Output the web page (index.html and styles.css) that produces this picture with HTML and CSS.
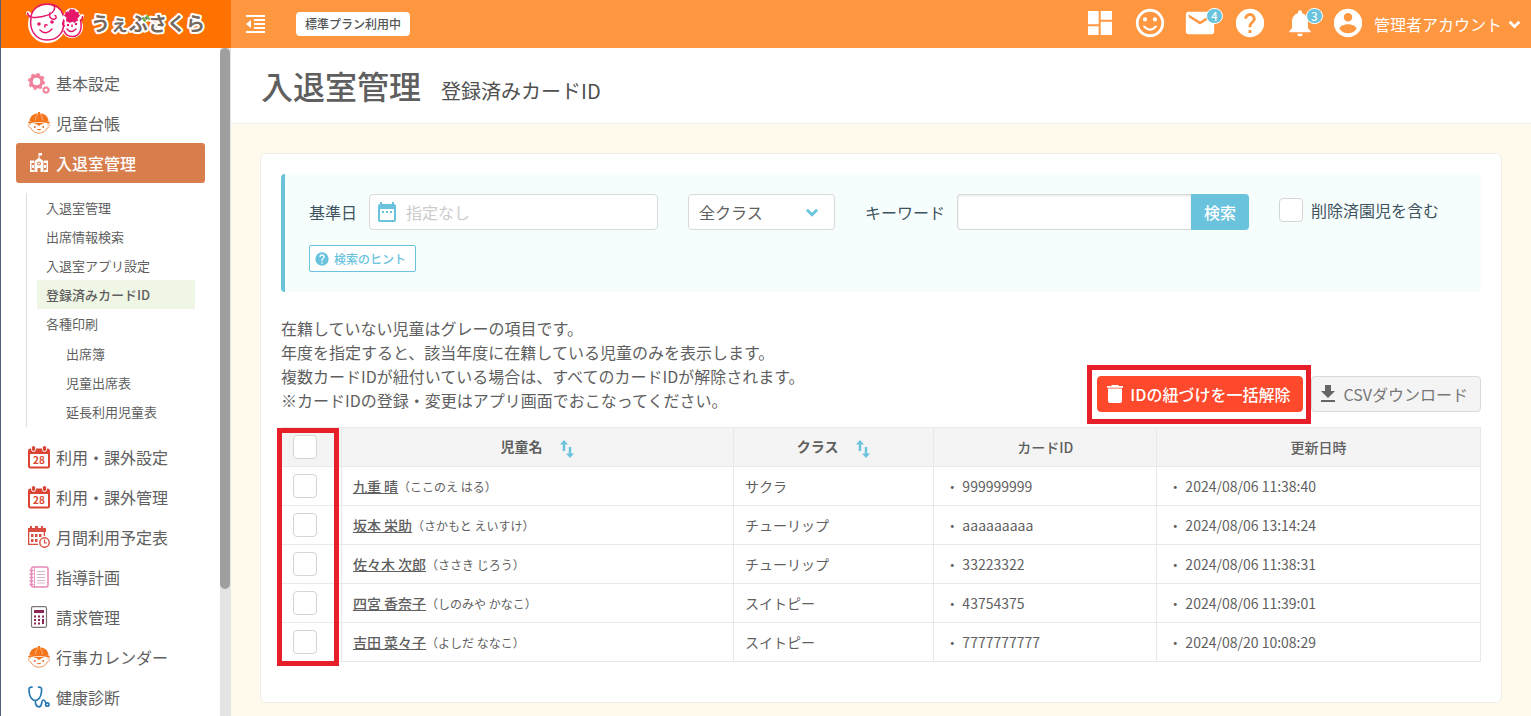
FILE: index.html
```html
<!DOCTYPE html>
<html lang="ja">
<head>
<meta charset="utf-8">
<title>登録済みカードID | うぇぶさくら</title>
<link rel="stylesheet" href="styles.css">
</head>
<body>
<svg class="defs" aria-hidden="true">
  <symbol id="help" viewBox="0 0 24 24"><path d="M12 2a10 10 0 1 0 0 20 10 10 0 0 0 0-20zm1 17h-2v-2h2v2zm2.070-7.750-.9.920C13.450 12.900 13 13.500 13 15h-2v-.5c0-1.100.45-2.100 1.170-2.830l1.240-1.260c.37-.36.59-.86.59-1.410a2 2 0 0 0-4 0H8a4 4 0 0 1 8 0c0 .88-.36 1.680-.93 2.250z"/></symbol>
  <symbol id="chevron" viewBox="0 0 12 8"><path d="M1.500 1.500 6 6l4.500-4.500" fill="none" stroke="currentColor" stroke-width="2.400"/></symbol>
  <symbol id="child" viewBox="0 0 22 22">
    <path d="M10 0h2v2h-2zM1.500 9.500C1.500 4 6 1.200 11 1.200S20.500 4 20.500 9.500z" fill="#f5751d"/>
    <path d="M7.500 8.500C7.500 5.500 8.500 3.500 10 2M14.500 8.500C14.500 5.500 13.500 3.500 12 2" fill="none" stroke="#ffc08f" stroke-width=".8"/>
    <path d="M.3 10.800Q11 7.500 21.700 10.800" fill="none" stroke="#f5751d" stroke-width="1.600"/>
    <path d="M2.800 12c-3-.5-3 3.500 0 4 1.500 3.200 4.500 5.200 8.200 5.200s6.700-2 8.200-5.200c3-.5 3-4.500 0-4" fill="#fff" stroke="#ef935a" stroke-width="1"/>
    <path d="M5.500 11.500q5.500-1.500 11 0-3.500.3-5.500 2.500-2-2.200-5.500-2.500z" fill="#f5751d"/><circle cx="6.800" cy="15" r=".9" fill="#d8622a"/><circle cx="15.200" cy="15" r=".9" fill="#d8622a"/><path d="M8.500 17q2.500 2.500 5 0z" fill="#f5751d"/>
  </symbol>
  <symbol id="calendar" viewBox="0 0 22 23">
    <rect x="0" y="2.500" width="22" height="20" rx="2.500" fill="#db4432"/><rect x="2" y="8" width="18" height="12.500" fill="#fff"/>
    <g fill="#db4432" stroke="#fff"><rect x="3.500" y="-.5" width="4" height="6" rx="2"/><rect x="14.500" y="-.5" width="4" height="6" rx="2"/></g>
  </symbol>
  <symbol id="sort" viewBox="0 0 14 18"><path d="M4 0 0 4.500h2.800V11h2.400V4.500H8zM10 18l4-4.500h-2.800V7H8.800v6.500H6z"/></symbol>
</svg>

<div class="app">
  <header class="header">
    <a class="logo" href="#" aria-label="うぇぶさくら">
      <svg width="184" height="46" viewBox="0 0 184 46">
        <g fill="#fff" stroke="#fff" stroke-width="4" stroke-linejoin="round" stroke-linecap="round"><circle cx="21" cy="23" r="17"/><circle cx="46" cy="26" r="9"/><circle cx="46" cy="15" r="6"/><path d="M2 12l4 4M55 16l1-1"/></g>
        <g fill="none" stroke="#e5156a" stroke-width="1.500" stroke-linecap="round">
          <path d="M1.500 12c1 4 4 5 8 4.500 8-.5 16-3 18-6.500 1.500-3 2-5-.5-5.500"/>
          <path d="M24 12c-1.500 4 1.500 7 5 6 2-.5 1-3.500 0-3.500M5 15C7 7 14 3 21 3c8 0 14 4 16 11"/>
          <path d="M5 17c-2 11 4 22 16 22 12 0 18-9 16.500-20"/>
          <path d="M38 20c-2 2-2 4 .5 5M38 30c2 5 6 5.500 8.500 5.500 7 0 10-7 8-16 1.500-.5 2-2 2-4"/>
          <path d="M14 29q6 6 12-1M41 28q4 5 9 0M19 26q-1-3 2-2M46 24v1.500"/>
        </g>
        <g fill="#e5156a"><circle cx="13" cy="23" r="1.800"/><circle cx="26" cy="21" r="1.800"/><circle cx="42" cy="24" r="1.200"/><circle cx="50" cy="23" r="1.200"/>
        <path d="M46 15l-2.500-5 1.300-1.500L46 9.800l1.200-1.300L49 10zM46 15l4-3.800 2.200.6-.3 1.700 1.300 1-1.500 1.800zM46 15l5 2.500.2 2.200-1.700-.1-.8 1.500-2.200-1zM46 15l-.5 5.500-2.200.8-.8-1.500-1.700.2-.1-2.200zM46 15l-5.500 1-1.700-1.600 1.300-1-.3-1.700 2.200-.8z" stroke="#e5156a" stroke-width="1.200"/></g>
        <text x="65" y="30" class="logo-text">うぇぶさくら</text>
        <path d="M117 17l2 3M121 15l2 3" stroke="#64b432" stroke-width="2" stroke-linecap="round"/>
      </svg>
    </a>
    <div class="toolbar">
      <button class="icon-btn" aria-label="メニューを閉じる"><svg width="20" height="18" viewBox="0 0 20 18" fill="#fff"><path d="M0 0h19v2H0zM8 4h11v2H8zM8 8h11v2H8zM8 12h11v2H8zM0 16h19v2H0zM0 9l5-4v8z"/></svg></button>
      <span class="plan">標準プラン利用中</span>
      <nav class="tools" aria-label="ツール">
        <a href="#" aria-label="ダッシュボード"><svg width="32" height="32" viewBox="0 0 24 24"><path d="M3 13h8V3H3v10zm0 8h8v-6.500H3V21zm9.500 0H21V11h-8.500v10zm0-18v6.500H21V3h-8.500z"/></svg></a>
        <a href="#" aria-label="アンケート"><svg width="34" height="34" viewBox="0 0 24 24"><path d="M12 2a10 10 0 1 0 0 20 10 10 0 0 0 0-20zm0 18a8 8 0 1 1 0-16 8 8 0 0 1 0 16zm3.500-9a1.500 1.500 0 1 0 0-3 1.500 1.500 0 0 0 0 3zm-7 0a1.500 1.500 0 1 0 0-3 1.500 1.500 0 0 0 0 3zM12 17.500c2.330 0 4.310-1.460 5.110-3.500h-1.700a4 4 0 0 1-6.820 0h-1.700c.8 2.040 2.780 3.500 5.110 3.500z"/></svg></a>
        <a href="#" aria-label="メール"><svg width="34" height="34" viewBox="0 0 24 24"><path d="M20 4H4a2 2 0 0 0-2 2v12c0 1.100.9 2 2 2h16a2 2 0 0 0 2-2V6a2 2 0 0 0-2-2zm0 4-8 5-8-5V6l8 5 8-5v2z"/></svg><span class="badge">4</span></a>
        <a href="#" aria-label="ヘルプ"><svg width="34" height="34"><use href="#help"/></svg></a>
        <a href="#" aria-label="お知らせ"><svg width="32" height="32" viewBox="0 0 24 24"><path d="M12 22c1.100 0 2-.9 2-2h-4a2 2 0 0 0 2 2zm6-6v-5c0-3.070-1.640-5.640-4.500-6.320V4a1.500 1.500 0 0 0-3 0v.68C7.630 5.360 6 7.920 6 11v5l-2 2v1h16v-1l-2-2z"/></svg><span class="badge">3</span></a>
      </nav>
      <button class="account"><svg width="34" height="34" viewBox="0 0 24 24" fill="currentColor"><path d="M12 2a10 10 0 1 0 0 20 10 10 0 0 0 0-20zm0 3a3 3 0 1 1 0 6 3 3 0 0 1 0-6zm0 14.200a7.200 7.200 0 0 1-6-3.220c.03-1.990 4-3.080 6-3.080s5.970 1.090 6 3.080a7.200 7.200 0 0 1-6 3.220z"/></svg><span>管理者アカウント</span><svg width="13" height="9"><use href="#chevron"/></svg></button>
    </div>
  </header>

  <div class="body">
    <aside class="sidebar">
      <nav class="menu" aria-label="メインメニュー">
        <a href="#" class="item"><svg width="22" height="22" viewBox="0 0 22 22" fill="none" stroke="#f0819a"><circle cx="8.500" cy="9.500" r="5.500" stroke-width="3.400"/><circle cx="8.500" cy="9.500" r="7.600" stroke-width="1.800" stroke-dasharray="3 2.970"/><circle cx="18" cy="18" r="2.400" stroke-width="1.600"/><circle cx="18" cy="18" r="3.500" stroke-width="1" stroke-dasharray="1.400 1.350"/></svg>基本設定</a>
        <a href="#" class="item"><svg width="22" height="22"><use href="#child"/></svg>児童台帳</a>
        <a href="#" class="item active"><svg width="22" height="22" viewBox="0 0 22 22" fill="#fff"><path d="M10.500 1h3.500v2.500h-2.500V6l4 3v11h-3v-4h-3v4h-3V9l4-3zM2 8.500h4V11H2zM16 8.500h4V11h-4zM2 11h1.500v7H6v2H2zM18.500 11H20v9h-4v-2h2.500z"/><path d="M4 13h2v3H4zM16 13h2v3h-2z"/><circle cx="11" cy="11.500" r="2" fill="#d87d4c"/><circle cx="11" cy="11.500" r="1"/></svg>入退室管理</a>
        <ul class="sub">
          <li><a href="#">入退室管理</a></li>
          <li><a href="#">出席情報検索</a></li>
          <li><a href="#">入退室アプリ設定</a></li>
          <li><a href="#" class="current">登録済みカードID</a></li>
          <li><a href="#">各種印刷</a>
            <ul class="nested">
              <li><a href="#">出席簿</a></li>
              <li><a href="#">児童出席表</a></li>
              <li><a href="#">延長利用児童表</a></li>
            </ul>
          </li>
        </ul>
        <a href="#" class="item"><svg width="22" height="23" viewBox="0 0 22 23"><use href="#calendar"/><text x="11" y="17.500" text-anchor="middle" class="cal-num">28</text></svg>利用・課外設定</a>
        <a href="#" class="item"><svg width="22" height="23" viewBox="0 0 22 23"><use href="#calendar"/><text x="11" y="17.500" text-anchor="middle" class="cal-num">28</text></svg>利用・課外管理</a>
        <a href="#" class="item"><svg width="22" height="22" viewBox="0 0 22 22" fill="#db4d40"><path d="M0 2h2V0h2v2h3V0h3v2h3V0h2v2h3v4H0z"/><path d="M0 6h1.300v11.700H10V19H0zM15.700 6H17v4h-1.300z"/><path d="M3 8h2.500v3H3zM7 8h2.500v3H7zM11 8h2.500v3H11zM3 13h2.500v3H3zM7 13h2.500v3H7z"/><circle cx="16.500" cy="16.500" r="4.700" fill="#fff" stroke="#db4d40" stroke-width="1.400"/><path d="M16.500 13.500v3.500H19" fill="none" stroke="#db4d40" stroke-width="1.200"/></svg>月間利用予定表</a>
        <a href="#" class="item"><svg width="22" height="22" viewBox="0 0 22 22" fill="none" stroke="#e887b8"><rect x="3.500" y="1" width="16.500" height="20" rx="2" stroke-width="1.500"/><path d="M6.500 1v20" stroke-width=".8"/><path d="M1.500 4.500h4M1.500 8h4M1.500 11.500h4M1.500 15h4M1.500 18.500h4" stroke-width="1.600"/><path d="M9 5.500h8M9 8.500h8M9 11.500h8M9 14.500h8M9 17h8" stroke="#d9b5cc" stroke-width="1"/></svg>指導計画</a>
        <a href="#" class="item"><svg width="22" height="22" viewBox="0 0 22 22" fill="#8c2554"><rect x="3.500" y=".7" width="15" height="20.600" rx="1.500" fill="#fff" stroke="#7d7475" stroke-width="1.200"/><path d="M6 4h10v3H6zM6 9.500h2v2H6zM10 9.500h2v2h-2zM14 9.500h2v2h-2zM6 13h2v2H6zM10 13h2v2h-2zM14 13h2v5h-2zM6 16.500h2v2H6zM10 16.500h2v2h-2z"/></svg>請求管理</a>
        <a href="#" class="item"><svg width="22" height="22"><use href="#child"/></svg>行事カレンダー</a>
        <a href="#" class="item"><svg width="22" height="22" viewBox="0 0 22 22" fill="none" stroke="#287ab5" stroke-width="1.700" stroke-linecap="round"><path d="M4 1.200C0 .8 1 4 1.300 7c.5 4 3 7.500 6 7.500s5.500-3.500 6-7.500c.3-3 1.300-6.200-2.700-5.800"/><path d="M7.300 14.500c0 4 .7 6.300 3.700 6.300 4 0 1.500-6.800 4.500-6.800 2.500 0 1.500 3.500 3 3.500"/><circle cx="19.300" cy="18.500" r="1.700"/></svg>健康診断</a>
      </nav>
      <div class="scrollbar"><div class="thumb"></div></div>
    </aside>

    <main class="main">
      <div class="page-title"><h1>入退室管理</h1><h2>登録済みカードID</h2></div>
      <section class="card">
        <form class="search">
          <div class="fields">
            <div class="field date-field"><label for="date">基準日</label>
              <div class="date-box"><svg width="24" height="24" viewBox="0 0 24 24" fill="#69c3dd"><path d="M5 2h2v2h10V2h2v2a2 2 0 0 1 2 2v14a2 2 0 0 1-2 2H5a2 2 0 0 1-2-2V6a2 2 0 0 1 2-2zm0 7v11h14V9zm2 2h2v2H7zm4 0h2v2h-2zm4 0h2v2h-2z"/></svg><input id="date" type="text" placeholder="指定なし"></div>
            </div>
            <div class="select-box"><select aria-label="クラス"><option>全クラス</option></select><svg width="14" height="9"><use href="#chevron"/></svg></div>
            <div class="field keyword-field"><label for="keyword">キーワード</label>
              <div class="keyword-box"><input id="keyword" type="text"><button type="button">検索</button></div>
            </div>
            <label class="include"><input type="checkbox" class="check">削除済園児を含む</label>
          </div>
          <button type="button" class="hint"><svg width="16" height="16" fill="currentColor"><use href="#help"/></svg>検索のヒント</button>
        </form>

        <div class="info">
          <p>在籍していない児童はグレーの項目です。<br>年度を指定すると、該当年度に在籍している児童のみを表示します。<br>複数カードIDが紐付いている場合は、すべてのカードIDが解除されます。<br>※カードIDの登録・変更はアプリ画面でおこなってください。</p>
          <div class="actions">
            <div class="marked"><button class="btn danger"><svg width="16" height="20" viewBox="0 0 16 20" fill="#fff"><path d="M1 4.500h14V17a2 2 0 0 1-2 2H3a2 2 0 0 1-2-2zM5 1h6l1 1h4v1.800H0V2h4z"/></svg>IDの紐づけを一括解除</button><span class="mark mark-button"></span></div>
            <button class="btn"><svg width="16" height="18" viewBox="0 0 16 18" fill="#666"><path d="M5 0h6v6h4l-7 7-7-7h4zM1 15h14v2H1z"/></svg>CSVダウンロード</button>
          </div>
        </div>

        <div class="table-wrap">
          <table>
            <colgroup><col class="c-check"><col class="c-name"><col class="c-class"><col class="c-card"><col class="c-date"></colgroup>
            <thead><tr><th><input type="checkbox" class="check" aria-label="すべて選択"></th><th class="strong">児童名<button class="sort" aria-label="児童名で並べ替え"><svg width="14" height="18"><use href="#sort"/></svg></button></th><th class="strong">クラス<button class="sort" aria-label="クラスで並べ替え"><svg width="14" height="18"><use href="#sort"/></svg></button></th><th>カードID</th><th>更新日時</th></tr></thead>
            <tbody>
              <tr><td><input type="checkbox" class="check" aria-label="九重 晴"></td><td><a href="#">九重 晴</a><small>（ここのえ はる）</small></td><td>サクラ</td><td>・ 999999999</td><td>・ 2024/08/06 11:38:40</td></tr>
              <tr><td><input type="checkbox" class="check" aria-label="坂本 栄助"></td><td><a href="#">坂本 栄助</a><small>（さかもと えいすけ）</small></td><td>チューリップ</td><td>・ aaaaaaaaa</td><td>・ 2024/08/06 13:14:24</td></tr>
              <tr><td><input type="checkbox" class="check" aria-label="佐々木 次郎"></td><td><a href="#">佐々木 次郎</a><small>（ささき じろう）</small></td><td>チューリップ</td><td>・ 33223322</td><td>・ 2024/08/06 11:38:31</td></tr>
              <tr><td><input type="checkbox" class="check" aria-label="四宮 香奈子"></td><td><a href="#">四宮 香奈子</a><small>（しのみや かなこ）</small></td><td>スイトピー</td><td>・ 43754375</td><td>・ 2024/08/06 11:39:01</td></tr>
              <tr><td><input type="checkbox" class="check" aria-label="吉田 菜々子"></td><td><a href="#">吉田 菜々子</a><small>（よしだ ななこ）</small></td><td>スイトピー</td><td>・ 7777777777</td><td>・ 2024/08/20 10:08:29</td></tr>
            </tbody>
          </table>
          <span class="mark mark-checks"></span>
        </div>
      </section>
    </main>
  </div>
</div>
</body>
</html>
```
FILE: styles.css
```css
* { box-sizing: border-box; }
body, h1, h2, p, ul { margin: 0; padding: 0; }
body, button, input, select {
  font-family: "Noto Sans CJK JP", "Noto Sans", sans-serif;
  font-size: 16px;
  color: #5f5f5f;
}
ul { list-style: none; }
a { color: inherit; text-decoration: none; }
button { margin: 0; padding: 0; border: 0; background: none; cursor: pointer; }
svg { flex: none; display: block; }
.defs { position: absolute; width: 0; height: 0; }
.cal-num { font: bold 10px "Noto Sans CJK JP", sans-serif; fill: #db4432; }

.app { display: flex; flex-direction: column; height: 100vh; overflow: hidden; border-left: 1px solid #52617a; }

/* header */
.header { display: flex; flex: none; height: 48px; background: #ff9640; color: #fff; }
.logo { display: flex; align-items: center; width: 230px; padding-left: 25px; background: #ff7100; }
.logo-text {
  font: 700 19px "Noto Sans CJK JP", sans-serif;
  fill: #75695f; stroke: #fff; stroke-width: 4px; stroke-linejoin: round; paint-order: stroke;
}
.toolbar { display: flex; flex: 1; align-items: center; padding: 0 10px 0 15px; }
.icon-btn { display: flex; }
.plan { margin-left: 30px; padding: 0 9px; border-radius: 4px; background: #fff; color: #555; font-size: 12px; font-weight: 500; line-height: 24px; }
.tools { display: flex; gap: 16px; margin: 0 14px 2px auto; }
.tools a { position: relative; display: flex; align-items: center; justify-content: center; width: 34px; height: 34px; }
.tools svg { fill: #fff; }
.badge {
  position: absolute; top: 2px; right: -6px; width: 17px; height: 16px;
  border: 1px solid #fff; border-radius: 8px; background: #69c3dd;
  font-size: 11px; font-weight: 500; line-height: 14px; text-align: center;
}
.account { display: flex; align-items: center; color: #fff; }
.account > svg:first-child { margin: 0 9px 2px 0; }
.account span { margin-right: 6px; }

/* sidebar */
.body { display: flex; flex: 1; min-height: 0; }
.sidebar { display: flex; flex: none; width: 230px; background: #fff; }
.menu { flex: 1; min-width: 0; padding: 15px 15px 0; overflow: hidden; }
.item { display: flex; align-items: center; gap: 6px; height: 40px; padding-left: 12px; border-radius: 3px; }
.item.active { background: #d87d4c; color: #fff; font-weight: 500; }
.sub { margin: 10px 10px; padding: 0 0 1px 10px; border-left: 1px solid #ddd; font-size: 13px; line-height: 29px; }
.sub a { display: block; padding-left: 9px; }
.sub .current { background: #eff6e5; font-weight: 500; }
.nested { margin-top: 1px; padding-left: 20px; }
.scrollbar { width: 11px; padding-right: 1px; background: #e4e4e4; }
.thumb { height: 81%; border-radius: 5px; background: #9f9f9f; }

/* content */
.main { flex: 1; min-width: 0; background: #fffaeb; }
.page-title { display: flex; align-items: baseline; gap: 20px; height: 76px; padding: 14px 30px 0; border-bottom: 1px solid #eee; background: #fff; }
h1 { font-size: 32px; font-weight: 500; line-height: 46px; }
h2 { color: #505050; font-size: 20px; font-weight: 400; }
.card { margin: 29px 29px 0; padding: 20px 20px 40px; border: 1px solid #eeeee6; border-radius: 6px; background: #fff; }

.search { padding: 20px 24px; border-left: 4px solid #69c3dd; border-radius: 4px; background: #f6fdfd; }
.fields { display: flex; align-items: center; margin-bottom: 15px; }
.field { display: flex; align-items: center; gap: 12px; }
.field label, .include { color: #3f5460; white-space: nowrap; }
.date-box, .select-box { position: relative; display: flex; align-items: center; height: 36px; border: 1px solid #d9d9d9; border-radius: 4px; background: #fff; }
.date-field { flex: 349; }
.date-box { flex: 1; padding-left: 5px; }
.date-box input { flex: 1; min-width: 0; height: 34px; padding: 0 0 0 7px; border: 0; background: none; outline: 0; }
input::placeholder { color: #ccc; }
.select-box { flex: none; width: 147px; margin: 0 30px; }
.select-box select { width: 100%; height: 34px; padding: 0 10px; appearance: none; border: 0; background: none; }
.select-box svg { position: absolute; right: 15px; color: #69c3dd; pointer-events: none; }
.keyword-field { flex: 384; }
.keyword-box { display: flex; flex: 1; }
.keyword-box input { flex: 1; min-width: 0; height: 36px; border: 1px solid #d9d9d9; border-right: 0; border-radius: 4px 0 0 4px; box-shadow: inset 0 1px 2px #e5e5e5; }
.keyword-box button { width: 58px; border-radius: 0 4px 4px 0; background: #69c3dd; color: #fff; font-weight: 500; }
.include { display: flex; align-items: center; gap: 8px; margin: 0 18px 4px 30px; }
.check { flex: none; display: block; width: 24px; height: 24px; margin: 0; appearance: none; border: 1px solid #d5d5d5; border-radius: 4px; background: #fff; }
.hint { display: flex; align-items: center; gap: 4px; height: 27px; padding: 0 9px 0 4px; border: 1px solid #69c3dd; border-radius: 2px; background: #fff; color: #69c3dd; font-size: 12px; font-weight: 500; }

.info { display: flex; align-items: flex-end; justify-content: space-between; margin: 24px 0 14px; }
.info p { margin-bottom: 1px; line-height: 24px; }
.actions { display: flex; gap: 8px; margin-bottom: 1px; }
.marked { position: relative; }
.btn { display: flex; align-items: center; gap: 7px; height: 36px; padding: 0 12px 0 8px; border: 1px solid #d9d9d9; border-radius: 4px; background: #f4f4f4; color: #777; }
.danger { padding: 0 12px 0 9px; border-color: #ff492c; background: #ff492c; color: #fff; font-weight: 500; }
.mark { position: absolute; z-index: 1; border: 5px solid #e71f28; pointer-events: none; }
.mark-button { inset: -11px -8px -12px -10px; }
.mark-checks { top: 1px; bottom: -4px; left: -4px; width: 62px; }

.table-wrap { position: relative; }
table { width: 100%; border-collapse: collapse; table-layout: fixed; font-size: 14px; }
.c-check { width: 5%; }
.c-name { width: 32.7%; }
.c-class { width: 16.7%; }
.c-card { width: 18.6%; }
.c-date { width: 27%; }
th, td { height: 39px; padding: 0 11px; border: 1px solid #e8e8e8; text-align: left; font-weight: 400; }
th { background: #f4f4f4; text-align: center; }
th:nth-child(n+4) { font-weight: 500; }
th.strong { font-weight: 700; }
td a { text-decoration: underline; font-weight: 500; }
small { font-size: 12px; }
.sort { margin-left: 18px; vertical-align: middle; }
.sort svg { fill: #69c3dd; }
```
